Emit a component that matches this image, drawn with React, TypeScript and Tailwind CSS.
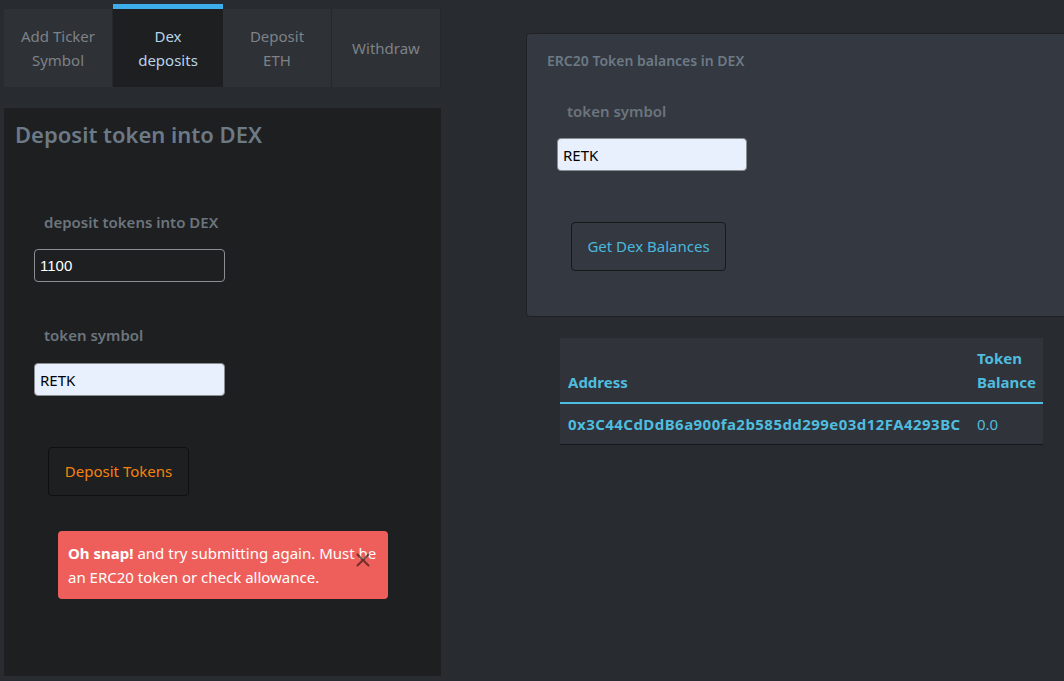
import { X } from "lucide-react";

const tabs = [
  { label: ["Add Ticker", "Symbol"], active: false },
  { label: ["Dex", "deposits"], active: true },
  { label: ["Deposit", "ETH"], active: false },
  { label: ["Withdraw"], active: false },
];

const font = "font-['Segoe_UI','Noto_Sans','Open_Sans',sans-serif]";

const Tabs = () => (
  <div className="flex h-[83px] items-end">
    {tabs.map((tab, i) => (
      <div
        key={i}
        className={
          tab.active
            ? "flex h-[83px] w-[110px] flex-col items-center justify-center border-t-[5px] border-[#3daee9] bg-[#1e1f21] text-[#b8d4ea]"
            : "flex h-[78px] w-[109px] flex-col items-center justify-center border-r border-[#25282c] bg-[#2e3136] text-[#7d8288]"
        }
      >
        {tab.label.map((line) => (
          <span key={line} className="text-[15px] leading-6">
            {line}
          </span>
        ))}
      </div>
    ))}
  </div>
);

const DepositPanel = () => (
  <div className="mt-[21px] flex h-[568px] flex-col bg-[#1e1f21] px-[11px] pt-[11px]">
    <h2 className="text-[22px] leading-[30px] font-semibold text-[#6c7a86]">Deposit token into DEX</h2>
    <div className="mt-[61px] flex flex-col pl-[19px]">
      <label className="pl-[10px] text-[15px] leading-6 font-semibold text-[#6c757d]">deposit tokens into DEX</label>
      <input
        defaultValue="1100"
        className="mt-[15px] h-[33px] w-[191px] rounded border border-[#8a8d91] bg-transparent px-[5px] font-['Liberation_Sans',sans-serif] text-[15px] text-white outline-none"
      />
      <label className="mt-[41px] pl-[10px] text-[15px] leading-6 font-semibold text-[#6c757d]">token symbol</label>
      <input
        defaultValue="RETK"
        className="mt-[16px] h-[33px] w-[191px] rounded border border-[#8a8d91] bg-[#e8f0fe] px-[5px] text-[15px] text-black outline-none"
      />
      <button className="mt-[51px] ml-[14px] h-[49px] w-[141px] rounded border border-[#0e0f10] text-[15px] text-[#f7820e]">
        Deposit Tokens
      </button>
      <div className="relative mt-[35px] ml-[24px] w-[330px] rounded bg-[#ee5f5b] px-[10px] py-[10px] text-[15px] leading-6 text-white">
        <strong className="font-bold">Oh snap!</strong> and try submitting again. Must be an ERC20 token or check allowance.
        <X className="absolute top-[18px] right-[14px] h-[22px] w-[22px] text-[#3b1a1a] opacity-70" strokeWidth={2.2} />
      </div>
    </div>
  </div>
);

const BalancesPanel = () => (
  <div className="flex w-[560px] flex-col">
    <div className="mt-[33px] flex h-[284px] flex-col rounded border border-[#1f2125] bg-[#343840] pt-[15px] pl-[20px]">
      <h3 className="text-[14px] leading-6 font-semibold text-[#6c7a86]">ERC20 Token balances in DEX</h3>
      <div className="mt-[26px] flex flex-col pl-[10px]">
        <label className="pl-[10px] text-[15px] leading-6 font-semibold text-[#6c757d]">token symbol</label>
        <input
          defaultValue="RETK"
          className="mt-[15px] h-[33px] w-[190px] rounded border border-[#8a8d91] bg-[#e8f0fe] px-[5px] text-[15px] text-black outline-none"
        />
        <button className="mt-[51px] ml-[14px] h-[49px] w-[155px] rounded border border-[#17181b] text-[15px] text-[#4ab8dc]">
          Get Dex Balances
        </button>
      </div>
    </div>
    <table className="mt-[21px] ml-[34px] w-[483px] table-fixed border-collapse bg-[#30333a] text-[15px] leading-6 text-[#4fbddf]">
      <thead>
        <tr className="border-b-2 border-[#4fbddf]">
          <th className="w-[409px] px-2 pt-2 pb-2 text-left align-bottom font-bold">Address</th>
          <th className="w-[74px] px-2 pt-2 pb-2 text-left align-bottom font-bold">Token Balance</th>
        </tr>
      </thead>
      <tbody>
        <tr className="border-b border-[#15171a]">
          <td className="px-2 py-2 font-bold tracking-[0.45px] whitespace-nowrap">0x3C44CdDdB6a900fa2b585dd299e03d12FA4293BC</td>
          <td className="px-2 py-2">0.0</td>
        </tr>
      </tbody>
    </table>
  </div>
);

export default function App() {
  return (
    <div className={`flex h-[681px] w-[1064px] overflow-hidden bg-[#282b30] ${font}`}>
      <div className="ml-[4px] flex w-[438px] flex-col pt-[4px]">
        <Tabs />
        <DepositPanel />
      </div>
      <div className="ml-[85px]">
        <BalancesPanel />
      </div>
    </div>
  );
}
